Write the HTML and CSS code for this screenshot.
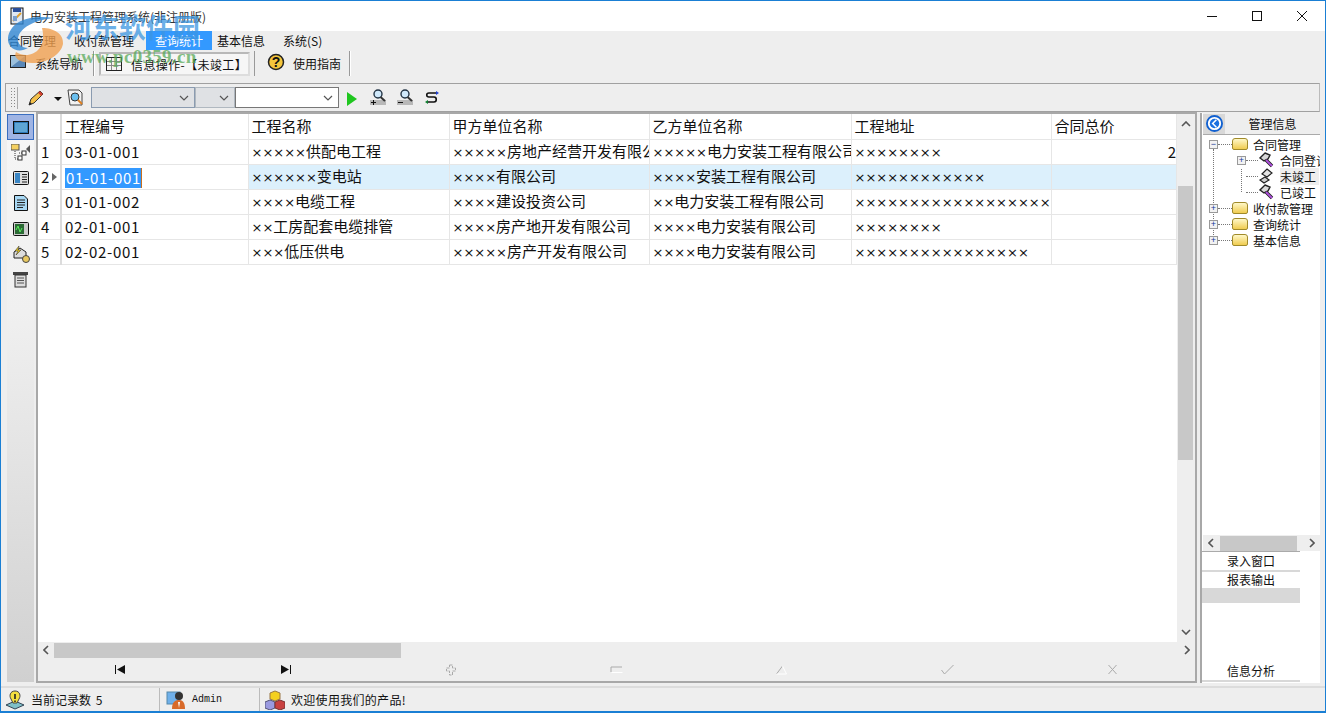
FILE: index.html
```html
<!DOCTYPE html>
<html lang="zh-CN">
<head>
    <meta charset="UTF-8">
    <title>电力安装工程管理系统(非注册版)</title>
    <link rel="stylesheet" href="styles.css">
</head>
<body>
    <div class="window">
        <div class="titlebar">
            <svg class="app-icon" width="16" height="18" viewBox="0 0 16 18"><rect x="1" y="1" width="12" height="16" fill="#dfe8f4" stroke="#111"/><rect x="3" y="1" width="8" height="4" fill="#2a4f9c"/><path d="M3 14 L11 6" stroke="#e0a030" stroke-width="2"/><rect x="3" y="9" width="4" height="5" fill="#7aa0d0"/></svg>
            <span class="title-text">电力安装工程管理系统(非注册版)</span>
            <div class="win-buttons">
                <svg width="10" height="10" viewBox="0 0 10 10"><path d="M0 5.5H10" stroke="#111"/></svg>
                <svg width="10" height="10" viewBox="0 0 10 10"><rect x=".5" y=".5" width="9" height="9" fill="none" stroke="#111"/></svg>
                <svg width="10" height="10" viewBox="0 0 10 10"><path d="M0 0L10 10M10 0L0 10" stroke="#111"/></svg>
            </div>
        </div>

        <div class="menubar">
            <span class="menu-item">合同管理</span>
            <span class="menu-item">收付款管理</span>
            <span class="menu-item active">查询统计</span>
            <span class="menu-item">基本信息</span>
            <span class="menu-item">系统(S)</span>
        </div>

        <div class="tabbar">
            <div class="tab tab-nav">
                <svg width="16" height="13" viewBox="0 0 16 13"><rect x=".5" y=".5" width="15" height="12" fill="#9cc0dc" stroke="#222"/><path d="M1 12L15 1V12Z" fill="#5a88b8"/></svg>
                <span>系统导航</span>
            </div>
            <div class="tab tab-current">
                <svg width="16" height="14" viewBox="0 0 16 14"><rect x=".5" y=".5" width="15" height="13" fill="#f4f4f4" stroke="#222"/><path d="M1 4.5H15M1 8.5H15M5.5 1V13M10.5 1V13" stroke="#888"/></svg>
                <span>信息操作-【未竣工】</span>
            </div>
            <div class="tab tab-help">
                <svg width="18" height="18" viewBox="0 0 18 18"><circle cx="9" cy="9" r="7.5" fill="#f5c63c" stroke="#222" stroke-width="1.5"/><text x="9" y="13.5" text-anchor="middle" class="help-mark">?</text></svg>
                <span>使用指南</span>
            </div>
        </div>

        <div class="toolbar">
            <div class="grip"></div>
            <svg class="tool-pencil" width="18" height="18" viewBox="0 0 18 18"><path d="M2 16L4 10L13 2L16 5L7 14Z" fill="#f3c04c" stroke="#333"/><path d="M12 3L15 6" stroke="#d04030" stroke-width="2.5"/><path d="M2 16L3 13L5 15Z" fill="#222"/></svg>
            <div class="drop-arrow"></div>
            <svg class="tool-find" width="16" height="18" viewBox="0 0 16 18"><path d="M1 1H12L15 4V16H3Z" fill="#f2f2f2" stroke="#444"/><circle cx="8" cy="8" r="4" fill="#6ac0f0" stroke="#333"/><path d="M11 11L15 15" stroke="#e08020" stroke-width="2"/></svg>
            <div class="combo combo-a"><svg width="10" height="6" viewBox="0 0 10 6"><path d="M1 1L5 5L9 1" fill="none" stroke="#555" stroke-width="1.2"/></svg></div>
            <div class="combo combo-b"><svg width="10" height="6" viewBox="0 0 10 6"><path d="M1 1L5 5L9 1" fill="none" stroke="#555" stroke-width="1.2"/></svg></div>
            <div class="combo combo-c"><svg width="10" height="6" viewBox="0 0 10 6"><path d="M1 1L5 5L9 1" fill="none" stroke="#555" stroke-width="1.2"/></svg></div>
            <svg class="tool-play" width="10" height="14" viewBox="0 0 10 14"><path d="M0 0L10 7L0 14Z" fill="#1fc61f"/></svg>
            <svg class="tool-zoom" width="17" height="17" viewBox="0 0 17 17"><rect x="0" y="11" width="16" height="5" fill="#b8b8b8"/><path d="M1 13.5H6M3.5 11V16" stroke="#111"/><circle cx="8" cy="5" r="4" fill="#cfe8fa" stroke="#234" stroke-width="1.4"/><path d="M10.5 8L15 12" stroke="#333" stroke-width="2"/></svg>
            <svg class="tool-zoom" width="17" height="17" viewBox="0 0 17 17"><rect x="0" y="11" width="16" height="5" fill="#b8b8b8"/><path d="M1 13.5H6" stroke="#111"/><circle cx="8" cy="5" r="4" fill="#cfe8fa" stroke="#234" stroke-width="1.4"/><path d="M10.5 8L15 12" stroke="#333" stroke-width="2"/></svg>
            <svg class="tool-zoom" width="16" height="16" viewBox="0 0 16 16"><path d="M13 3H5C2 3 2 7 5 7H10C13 7 13 12 10 12H3" fill="none" stroke="#111" stroke-width="1.6"/><path d="M12 1L15 3L12 5Z" fill="#2040d0"/><path d="M4 10L1 12L4 14Z" fill="#108030"/></svg>
        </div>

        <div class="main">
            <div class="sidebar">
                <div class="side-btn selected"><svg width="16" height="13" viewBox="0 0 16 13"><rect x=".5" y=".5" width="15" height="12" fill="#2d79b9" stroke="#111"/><rect x="2" y="2" width="12" height="9" fill="#5ea5d4"/></svg></div>
                <div class="side-btn"><svg width="20" height="18" viewBox="0 0 20 18"><rect x="0" y="0" width="8" height="6" fill="#f4d060" stroke="#555"/><path d="M4 7V15H7M8 9H12" stroke="#333" stroke-dasharray="1 1" fill="none"/><rect x="11" y="7" width="4" height="4" fill="#fff" stroke="#333"/><rect x="7" y="12" width="4" height="4" fill="#fff" stroke="#333"/><path d="M19 1L15 5L19 9Z" fill="#555"/></svg></div>
                <div class="side-btn"><svg width="16" height="14" viewBox="0 0 16 14"><rect x=".5" y=".5" width="15" height="13" rx="1" fill="#ddd" stroke="#111"/><rect x="2" y="2" width="5" height="10" fill="#3a86c4"/><path d="M9 3.5H14M9 6H14M9 8.5H14M9 11H14" stroke="#222"/></svg></div>
                <div class="side-btn"><svg width="14" height="16" viewBox="0 0 14 16"><path d="M.5 .5H10L13.5 4V15.5H.5Z" fill="#a8d8f4" stroke="#111"/><path d="M3 5H11M3 7.5H11M3 10H11M3 12.5H9" stroke="#222"/></svg></div>
                <div class="side-btn"><svg width="16" height="14" viewBox="0 0 16 14"><rect x=".5" y=".5" width="15" height="13" rx="1" fill="#ccc" stroke="#111"/><rect x="2" y="2" width="9" height="10" fill="#2b6b35"/><path d="M3 8L5 4L7 10L9 6" fill="none" stroke="#5cf05c"/></svg></div>
                <div class="side-btn"><svg width="18" height="18" viewBox="0 0 18 18"><path d="M2 7L8 3L14 7V13H2Z" fill="#ddd" stroke="#222"/><path d="M7 1L3 6H6L4 10L9 5H6Z" fill="#f2d020" stroke="#222" stroke-width=".5"/><circle cx="14" cy="14" r="3.5" fill="#e8c860" stroke="#444"/></svg></div>
                <div class="side-btn"><svg width="16" height="16" viewBox="0 0 16 16"><rect x="0" y="0" width="15" height="3" fill="#444"/><rect x="2" y="3" width="11" height="12" fill="#ddd" stroke="#333"/><path d="M4 6H11M4 8.5H11M4 11H11" stroke="#555"/></svg></div>
            </div>

            <div class="grid-panel">
                <div class="grid-area">
                    <div class="grid-clip">
                        <table class="grid">
                            <thead>
                                <tr><th class="row-head"></th><th>工程编号</th><th>工程名称</th><th>甲方单位名称</th><th>乙方单位名称</th><th>工程地址</th><th>合同总价</th></tr>
                            </thead>
                            <tbody>
                                <tr>
                                    <td class="row-head">1</td><td class="code">03-01-001</td><td><span class="x">×××××</span>供配电工程</td><td><span class="x">×××××</span>房地产经营开发有限公司</td><td><span class="x">×××××</span>电力安装工程有限公司</td><td><span class="x">××××××××</span></td><td class="price">2</td>
                                </tr>
                                <tr class="current">
                                    <td class="row-head">2<i class="row-arrow"></i></td><td class="code"><span class="cell-edit">01-01-001</span></td><td><span class="x">××××××</span>变电站</td><td><span class="x">××××</span>有限公司</td><td><span class="x">××××</span>安装工程有限公司</td><td><span class="x">××××××××××××</span></td><td></td>
                                </tr>
                                <tr>
                                    <td class="row-head">3</td><td class="code">01-01-002</td><td><span class="x">××××</span>电缆工程</td><td><span class="x">××××</span>建设投资公司</td><td><span class="x">××</span>电力安装工程有限公司</td><td><span class="x">××××××××××××××××××</span></td><td></td>
                                </tr>
                                <tr>
                                    <td class="row-head">4</td><td class="code">02-01-001</td><td><span class="x">××</span>工房配套电缆排管</td><td><span class="x">××××</span>房产地开发有限公司</td><td><span class="x">××××</span>电力安装有限公司</td><td><span class="x">××××××××</span></td><td></td>
                                </tr>
                                <tr>
                                    <td class="row-head">5</td><td class="code">02-02-001</td><td><span class="x">×××</span>低压供电</td><td><span class="x">×××××</span>房产开发有限公司</td><td><span class="x">××××</span>电力安装有限公司</td><td><span class="x">××××××××××××××××</span></td><td></td>
                                </tr>
                            </tbody>
                        </table>
                    </div>
                    <div class="vscroll">
                        <svg width="10" height="6" viewBox="0 0 10 6"><path d="M1 5L5 1L9 5" fill="none" stroke="#555" stroke-width="1.6"/></svg>
                        <div class="vtrack"><div class="vthumb"></div></div>
                        <svg width="10" height="6" viewBox="0 0 10 6"><path d="M1 1L5 5L9 1" fill="none" stroke="#555" stroke-width="1.6"/></svg>
                    </div>
                </div>
                <div class="hscroll">
                    <svg width="6" height="10" viewBox="0 0 6 10"><path d="M5 1L1 5L5 9" fill="none" stroke="#555" stroke-width="1.6"/></svg>
                    <div class="htrack"><div class="hthumb"></div></div>
                    <svg width="6" height="10" viewBox="0 0 6 10"><path d="M1 1L5 5L1 9" fill="none" stroke="#555" stroke-width="1.6"/></svg>
                </div>
                <div class="navigator">
                    <svg width="11" height="9" viewBox="0 0 11 9"><path d="M.5 0V9" stroke="#111"/><path d="M2 4.5L10 0V9Z" fill="#111"/></svg>
                    <svg width="11" height="9" viewBox="0 0 11 9"><path d="M10.5 0V9" stroke="#111"/><path d="M9 4.5L1 0V9Z" fill="#111"/></svg>
                    <svg width="12" height="12" viewBox="0 0 12 12"><path d="M4 1H7V4H10V7H7V11H4V7H1V4H4Z" fill="none" stroke="#aaa" stroke-dasharray="3 1"/></svg>
                    <svg width="12" height="8" viewBox="0 0 12 8"><path d="M.5 6V1H11.5" fill="none" stroke="#aaa"/><path d="M1 6.5H12" stroke="#fff"/></svg>
                    <svg width="12" height="10" viewBox="0 0 12 10"><path d="M1 9L7 1" stroke="#aaa" fill="none"/><path d="M7 1L11 9H1" stroke="#fff" fill="none"/></svg>
                    <svg width="14" height="12" viewBox="0 0 14 12"><path d="M1 6L4 10L13 1" stroke="#aaa" fill="none"/></svg>
                    <svg width="10" height="11" viewBox="0 0 10 11"><path d="M1 1L9 10M9 1L1 10" stroke="#aaa" fill="none"/></svg>
                </div>
            </div>

            <div class="tree-panel">
                <div class="tree-head">
                    <span class="collapse-btn"><svg width="18" height="18" viewBox="0 0 18 18"><circle cx="9" cy="9" r="8" fill="#fff" stroke="#1060d0" stroke-width="2"/><circle cx="9" cy="9" r="5" fill="#1a70e0"/><path d="M11 5L7 9L11 13" fill="none" stroke="#fff" stroke-width="1.6"/></svg></span>
                    <span class="tree-title">管理信息</span>
                </div>
                <div class="tree">
                    <div class="tree-guide guide-root"></div>
                    <div class="tree-guide guide-sub"></div>
                    <div class="tree-row"><i class="expander">−</i><i class="dots"></i><i class="folder"></i><span>合同管理</span></div>
                    <div class="tree-row level-1"><i class="expander">+</i><i class="dots"></i><svg class="tool-ico" width="16" height="16" viewBox="0 0 16 16"><path d="M7 1L12 3L10 7L6 9L2 6Z" fill="#d8d8d8" stroke="#222" stroke-width="1.4"/><path d="M8 8L14 14" stroke="#222" stroke-width="3.4"/><path d="M8 8L14 14" stroke="#b050e0" stroke-width="1.8"/></svg><span>合同登记</span></div>
                    <div class="tree-row level-1"><i class="no-exp"></i><i class="dots"></i><svg class="tool-ico" width="16" height="16" viewBox="0 0 16 16"><path d="M9 1L14 5L9 9L4 6Z" fill="#e4e4e4" stroke="#222" stroke-width="1.2"/><path d="M7 9L11 12L6 15L2 12Z" fill="#d0d0d0" stroke="#222" stroke-width="1.2"/></svg><span class="hl">未竣工</span></div>
                    <div class="tree-row level-1"><i class="no-exp"></i><i class="dots"></i><svg class="tool-ico" width="16" height="16" viewBox="0 0 16 16"><path d="M7 1L12 3L10 7L6 9L2 6Z" fill="#d8d8d8" stroke="#222" stroke-width="1.4"/><path d="M8 8L14 14" stroke="#222" stroke-width="3.4"/><path d="M8 8L14 14" stroke="#b050e0" stroke-width="1.8"/></svg><span>已竣工</span></div>
                    <div class="tree-row"><i class="expander">+</i><i class="dots"></i><i class="folder"></i><span>收付款管理</span></div>
                    <div class="tree-row"><i class="expander">+</i><i class="dots"></i><i class="folder"></i><span>查询统计</span></div>
                    <div class="tree-row"><i class="expander">+</i><i class="dots"></i><i class="folder"></i><span>基本信息</span></div>
                </div>
                <div class="tree-hscroll">
                    <svg width="6" height="10" viewBox="0 0 6 10"><path d="M5 1L1 5L5 9" fill="none" stroke="#555" stroke-width="1.6"/></svg>
                    <div class="tree-htrack"><div class="tree-hthumb"></div></div>
                    <svg width="6" height="10" viewBox="0 0 6 10"><path d="M1 1L5 5L1 9" fill="none" stroke="#555" stroke-width="1.6"/></svg>
                </div>
                <div class="outlook">
                    <div class="outlook-btn">录入窗口</div>
                    <div class="outlook-btn no-rule">报表输出</div>
                    <div class="outlook-band"></div>
                    <div class="outlook-space"></div>
                    <div class="outlook-btn">信息分析</div>
                </div>
            </div>
        </div>

        <div class="statusbar">
            <div class="status-cell cell-count">
                <svg width="20" height="20" viewBox="0 0 20 20"><path d="M10 11L19 15L10 19L1 15Z" fill="#7fc0c8" stroke="#345"/><path d="M10 1C5 1 4 6 6 9L8 13H12L14 9C16 6 15 1 10 1Z" fill="#f4e040" stroke="#444"/><path d="M10 4V9M10 10.5V12" stroke="#222" stroke-width="1.6"/></svg>
                <span>当前记录数 <span class="count-num">5</span></span>
            </div>
            <div class="status-cell cell-user">
                <svg width="20" height="20" viewBox="0 0 20 20"><rect x="1" y="2" width="13" height="12" fill="#6fb0ea" stroke="#58a"/><circle cx="13" cy="6" r="4" fill="#333"/><path d="M6 19C6 12 9 10 13 10C17 10 19 13 19 19Z" fill="#d86a2a"/><path d="M12 12L14 12L13 18Z" fill="#fff"/></svg>
                <span class="mono">Admin</span>
            </div>
            <div class="status-cell cell-msg">
                <svg width="20" height="20" viewBox="0 0 20 20"><path d="M10 1L15 3V9L10 11L5 9V3Z" fill="#f4d020" stroke="#974"/><path d="M5 10L10 12V18L5 20L0 18V12Z" fill="#9a9ae0" stroke="#557"/><path d="M15 10L20 12V18L15 20L10 18V12Z" fill="#c84040" stroke="#733"/></svg>
                <span>欢迎使用我们的产品!</span>
            </div>
        </div>

        <div class="watermark">
            <svg class="wm-logo" width="62" height="60" viewBox="0 0 62 60"><path d="M4 32C6 16 24 8 50 12C30 14 16 22 14 32C13 38 18 42 24 42C14 48 3 42 4 32Z" fill="#2f86d2" opacity=".8"/><path d="M38 22C50 22 60 28 59 38C56 52 36 60 20 56C12 54 10 50 12 46C24 54 44 46 38 22Z" fill="#f0a050" opacity=".8"/></svg>
            <span class="wm-name">河东软件园</span>
            <span class="wm-url">www.pc0359.cn</span>
        </div>
    </div>
</body>
</html>
```

FILE: styles.css
```css
* {
    box-sizing: border-box;
}
html, body {
    margin: 0;
    height: 100%;
    overflow: hidden;
}
body {
    font-family: "Noto Sans CJK SC", sans-serif;
    font-size: 12px;
    color: #111;
}
i {
    font-style: normal;
}
.window {
    position: relative;
    height: 713px;
    display: flex;
    flex-direction: column;
    background-color: #eeeeee;
    border: 1px solid #1a7fd4;
    border-bottom-width: 2px;
}

/* title and menus */
.titlebar {
    height: 30px;
    flex: none;
    background-color: white;
    display: flex;
    align-items: center;
    padding-left: 9px;
}
.title-text {
    margin-left: 4px;
    color: #333;
}
.win-buttons {
    margin-left: auto;
    display: flex;
    gap: 35px;
    padding-right: 18px;
}
.menubar {
    height: 20px;
    flex: none;
    display: flex;
    align-items: flex-start;
    padding-left: 1px;
}
.menu-item {
    padding: 0 6px;
    line-height: 19px;
    margin-right: 6px;
}
.menu-item.active {
    padding: 0 9px;
    background-color: #3399ff;
    color: white;
    margin-right: -1px;
}
.tabbar {
    height: 28px;
    flex: none;
    display: flex;
    align-items: stretch;
    padding-left: 9px;
    padding-bottom: 3px;
}
.tab {
    display: flex;
    align-items: center;
    border-right: 1px solid #999;
    box-shadow: 1px 0 0 white;
}
.tab-nav {
    width: 84px;
    gap: 9px;
}
.tab-nav svg {
    margin-top: -5px;
}
.tab-current {
    width: 151px;
    margin: 1px 5px 0 5px;
    padding-left: 5px;
    gap: 9px;
    letter-spacing: 0.4px;
    background-color: #f6f6f6;
    border: 2px solid #b8b8b8;
    border-right-color: #ddd;
    border-bottom-color: #ddd;
    box-shadow: none;
}
.tab-help {
    width: 96px;
    padding-left: 12px;
    gap: 8px;
    margin-left: -1px;
    border-left: 1px solid #999;
}
.tab-help svg {
    margin-top: -3px;
}
.help-mark {
    font-family: "Liberation Sans", sans-serif;
    font-size: 14px;
    font-weight: bold;
    fill: #111;
}

/* tool strip */
.toolbar {
    height: 29px;
    flex: none;
    margin: 4px 5px 0 4px;
    display: flex;
    align-items: center;
    border: 1px solid #a0a0a0;
    border-right-color: #bbb;
    background-color: #eeeeee;
    padding-left: 4px;
}
.grip {
    width: 8px;
    height: 22px;
    border-right: 1px solid #aaa;
    background-image: radial-gradient(#888 0.6px, transparent 0.8px);
    background-size: 3px 3px;
    margin-right: 9px;
}
.drop-arrow {
    width: 0;
    height: 0;
    border: 4px solid transparent;
    border-top-color: #111;
    border-bottom-width: 0;
    margin: 2px 5px 0 9px;
}
.tool-find {
    margin-right: 8px;
}
.combo {
    height: 21px;
    display: flex;
    align-items: center;
    justify-content: flex-end;
    padding-right: 5px;
    border: 1px solid #8a9bb0;
    background-color: #dfe1e4;
}
.combo-a {
    width: 104px;
}
.combo-b {
    width: 40px;
    border-color: #b0b8c0;
}
.combo-c {
    width: 104px;
    background-color: white;
    border-color: #777;
}
.tool-play {
    margin: 2px 13px 0 8px;
}
.tool-zoom {
    margin-right: 10px;
}

/* main panels */
.main {
    flex: 1;
    min-height: 0;
    display: flex;
    padding-left: 6px;
}
.sidebar {
    width: 27px;
    flex: none;
    display: flex;
    flex-direction: column;
    margin-right: 2px;
    margin-top: 2px;
    margin-bottom: 4px;
    background: linear-gradient(#f6f6f6, #f0f0f0 35%, #d0d0d0);
}
.side-btn {
    height: 25.4px;
    flex: none;
    display: flex;
    align-items: center;
    justify-content: center;
}
.side-btn.selected {
    height: 26px;
    background-color: #9fb4e4;
    border: 1px solid #3a6ec0;
}
.grid-panel {
    width: 1161px;
    flex: none;
    display: flex;
    flex-direction: column;
    border: 2px solid #a8a8a8;
    margin-bottom: 3px;
    background-color: #eeeeee;
}
.grid-area {
    height: 528px;
    flex: none;
    display: flex;
}
.grid-clip {
    width: 1139px;
    background-color: white;
    overflow: hidden;
}
.grid {
    table-layout: fixed;
    border-collapse: collapse;
    width: 1139px;
    font-size: 15px;
}
.grid th, .grid td {
    height: 25px;
    padding: 0 0 0 3px;
    text-align: left;
    font-weight: normal;
    white-space: nowrap;
    overflow: hidden;
    border-right: 1px solid #e6e6e6;
    border-bottom: 1px solid #e6e6e6;
    line-height: 22px;
}
.grid .row-head {
    width: 23px;
    border-right: 2px solid #dcdcdc;
    position: relative;
}
.grid th:nth-child(2) { width: 187px; }
.grid th:nth-child(3) { width: 201px; }
.grid th:nth-child(4) { width: 200px; }
.grid th:nth-child(5) { width: 202px; }
.grid th:nth-child(6) { width: 200px; }
.x {
    font-family: "DejaVu Sans", sans-serif;
    font-size: 13px;
}
.code {
    letter-spacing: 0.7px;
}
.price {
    text-align: right !important;
}
.current td {
    background-color: #dcf0fc;
}
.current .row-head, .current .code {
    background-color: white;
}
.row-arrow {
    position: absolute;
    left: 14px;
    top: 8px;
    width: 0;
    height: 0;
    border: 4px solid transparent;
    border-left: 5px solid #666;
    border-right-width: 0;
}
.cell-edit {
    background-color: #3399ff;
    color: white;
    display: inline-block;
    border-right: 1px solid #c87020;
    line-height: 20px;
    padding-left: 1px;
    vertical-align: middle;
}
.vscroll {
    width: 18px;
    flex: none;
    display: flex;
    flex-direction: column;
    align-items: center;
    padding: 7px 0;
    gap: 7px;
}
.vtrack {
    flex: 1;
    width: 100%;
}
.vthumb {
    height: 274px;
    margin-top: 52px;
    margin-left: 1px;
    background-color: #c8c8c8;
    width: 15px;
}
.hscroll {
    height: 16px;
    flex: none;
    display: flex;
    align-items: center;
    padding: 0 5px;
}
.htrack {
    flex: 1;
    margin: 0 5px;
    height: 15px;
}
.hthumb {
    width: 347px;
    height: 100%;
    background-color: #c8c8c8;
}
.navigator {
    flex: 1;
    display: flex;
    justify-content: space-around;
    align-items: center;
}
.navigator svg {
    width: 165px;
}

/* tree */
.tree-panel {
    flex: 1;
    min-width: 0;
    margin: 1px 5px 3px 3px;
    border-left: 2px solid #a8a8a8;
    background-color: white;
    display: flex;
    flex-direction: column;
    overflow: hidden;
}
.tree-head {
    height: 22px;
    flex: none;
    display: flex;
    align-items: center;
    background-color: #eeeeee;
    border-bottom: 1px solid #aaa;
    margin-left: 1px;
}
.collapse-btn {
    width: 22px;
    height: 20px;
    display: flex;
    align-items: center;
    justify-content: center;
    background-color: #d8d8d8;
}
.collapse-btn svg {
    width: 17px;
    height: 17px;
}
.tree-title {
    flex: 1;
    text-align: center;
}
.tree {
    flex: 1;
    position: relative;
    padding-top: 1px;
    overflow: hidden;
}
.tree-row {
    height: 16px;
    display: flex;
    align-items: center;
    padding-left: 7px;
    white-space: nowrap;
    position: relative;
}
.tree-row.level-1 {
    padding-left: 35px;
}
.expander {
    width: 9px;
    height: 9px;
    flex: none;
    border: 1px solid #999;
    background-color: #f2f2f2;
    color: #123a9a;
    font-family: "Liberation Sans", sans-serif;
    font-size: 9px;
    line-height: 7px;
    text-align: center;
}
.no-exp {
    width: 9px;
    height: 9px;
    flex: none;
}
.dots {
    width: 14px;
    flex: none;
    border-top: 1px dotted #777;
}
.level-1 .dots {
    width: 12px;
}
.folder {
    width: 16px;
    height: 12px;
    flex: none;
    margin-right: 5px;
    border: 1px solid #a08a2a;
    border-radius: 3px 3px 2px 2px;
    background: linear-gradient(#fff8c8, #f0cc50);
}
.tool-ico {
    flex: none;
    margin-right: 6px;
}
.hl {
    background-color: #eeeeee;
    padding-right: 3px;
}
.tree-guide {
    position: absolute;
    border-left: 1px dotted #777;
}
.guide-root {
    left: 11px;
    top: 14px;
    height: 90px;
}
.guide-sub {
    left: 39px;
    top: 34px;
    height: 23px;
}
.tree-hscroll {
    height: 16px;
    flex: none;
    display: flex;
    align-items: center;
    padding: 0 5px;
    background-color: #eeeeee;
    margin-left: 1px;
}
.tree-htrack {
    flex: 1;
    height: 15px;
    padding: 0 12px 0 6px;
}
.tree-hthumb {
    height: 100%;
    background-color: #c8c8c8;
}
.outlook {
    height: 132px;
    flex: none;
    border-top: 1px solid #aaa;
    display: flex;
    flex-direction: column;
    width: 98px;
}
.outlook-btn {
    height: 20px;
    flex: none;
    line-height: 18px;
    text-align: center;
    border-bottom: 2px solid #d8d8d8;
}
.outlook-btn.no-rule {
    height: 16px;
    line-height: 16px;
    border-bottom: none;
}
.outlook-btn:last-child {
    margin-bottom: 1px;
}
.outlook-band {
    height: 15px;
    flex: none;
    background-color: #d8d8d8;
}
.outlook-space {
    flex: 1;
}

/* status */
.statusbar {
    height: 25px;
    flex: none;
    display: flex;
    border-top: 2px solid #dcdcdc;
}
.status-cell {
    display: flex;
    align-items: center;
    gap: 6px;
    border-right: 1px solid #bbb;
    padding-left: 4px;
}
.cell-count {
    width: 159px;
}
.count-num {
    margin-left: 2px;
}
.cell-user {
    width: 100px;
    padding-left: 6px;
}
.cell-msg {
    flex: 1;
    border-right: none;
    padding-left: 5px;
    letter-spacing: 0.3px;
}
.mono {
    font-family: "Liberation Mono", monospace;
    font-size: 10px;
}

/* site watermark stamped on the screenshot */
.watermark {
    position: absolute;
    left: 0;
    top: 0;
    width: 340px;
    height: 80px;
    pointer-events: none;
}
.wm-logo {
    position: absolute;
    left: 3px;
    top: 5px;
}
.wm-name {
    position: absolute;
    left: 64px;
    top: 6px;
    font-size: 27px;
    font-weight: bold;
    line-height: 40px;
    color: rgba(60, 150, 225, 0.75);
}
.wm-url {
    position: absolute;
    left: 66px;
    top: 45px;
    font-family: "Liberation Serif", serif;
    font-size: 19px;
    font-weight: bold;
    letter-spacing: 0.3px;
    color: rgba(90, 170, 90, 0.75);
}
```
